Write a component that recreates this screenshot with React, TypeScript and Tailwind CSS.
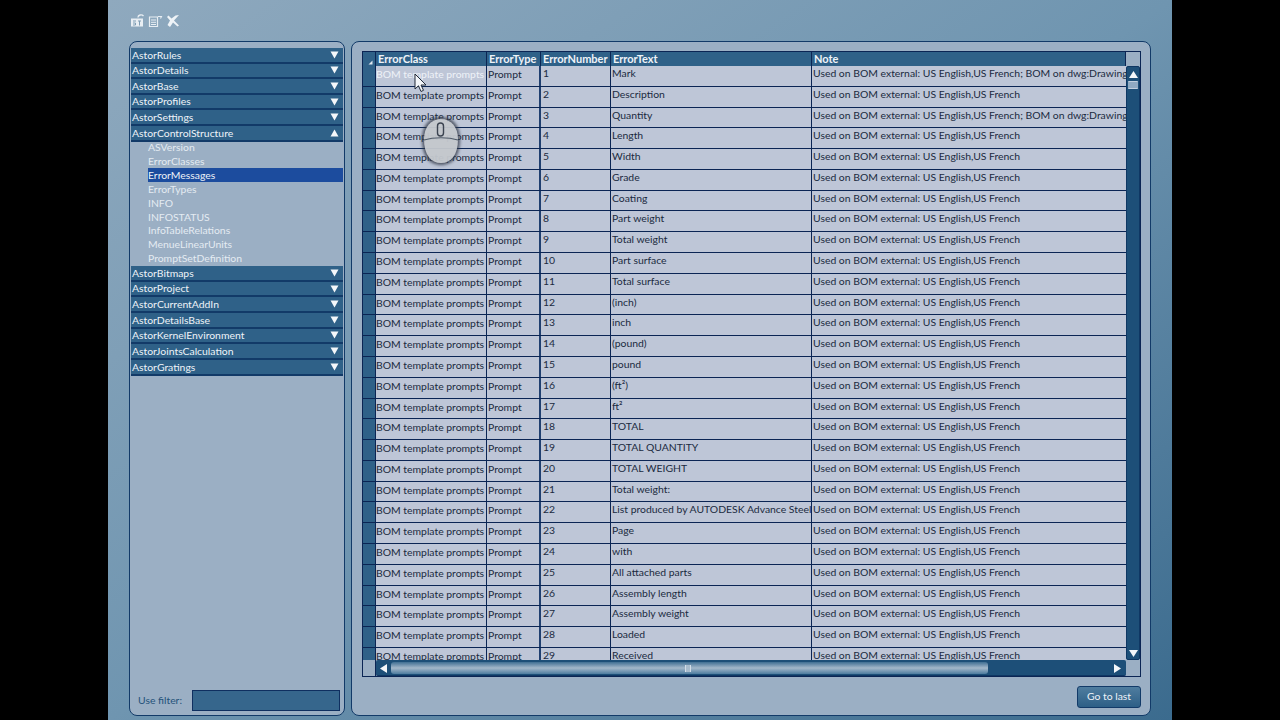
const font = "[font-family:'Lato','Open_Sans',sans-serif]";

const texts = ["Mark","Description","Quantity","Length","Width","Grade","Coating","Part weight","Total weight","Part surface","Total surface","(inch)","inch","(pound)","pound","(ft²)","ft²","TOTAL","TOTAL QUANTITY","TOTAL WEIGHT","Total weight:","List produced by AUTODESK Advance Steel","Page","with","All attached parts","Assembly length","Assembly weight","Loaded","Received"];
const noteA = "Used on BOM external: US English,US French";
const noteB = "Used on BOM external: US English,US French; BOM on dwg:Drawing-";

function Head({ label, open }: { label: string; open?: boolean }) {
  return (
    <div className="h-[15.62px] shrink-0 flex items-center justify-between bg-[#2f6188] border-b-2 border-[#123a68] pl-[1px] pr-[4px] text-[10.4px] text-[#eef3f8] leading-none">
      <span>{label}</span>
      <svg width="9" height="8" viewBox="0 0 9 8" className="shrink-0">
        <path d={open ? "M4.5 0.5 L8.5 7.5 L0.5 7.5 Z" : "M0.5 0.5 L8.5 0.5 L4.5 7.5 Z"} fill="#f4f7fa" />
      </svg>
    </div>
  );
}

function Sub({ label, active }: { label: string; active?: boolean }) {
  return (
    <div className={"h-[13.85px] shrink-0 ml-[17px] flex items-center text-[10.4px] leading-none " + (active ? "bg-[#1c4c9e] text-[#eef3f8]" : "text-[#e4ebf2]")}>
      {label}
    </div>
  );
}

function Row({ n, first }: { n: number; first: boolean }) {
  const note = n === 1 || n === 3 ? noteB : noteA;
  return (
    <div className="h-[20.79px] shrink-0 flex border-b border-[#0b2554] text-[10.4px] leading-none text-[#1a2a40] overflow-hidden">
      <div className="w-[13px] shrink-0 bg-[#2f6188] border-r border-[#0b2554]" />
      <div className={"w-[111px] shrink-0 border-r border-[#0b2554] pt-[3px] whitespace-nowrap overflow-hidden " + (first ? "text-[#eef2f8]" : "")}>BOM template prompts</div>
      <div className="w-[54px] shrink-0 border-r-2 border-[#1f3f70] pl-[1px] pt-[3px]">Prompt</div>
      <div className="w-[70px] shrink-0 border-r border-[#0b2554] pl-[2px] pt-[2px]">{n}</div>
      <div className="w-[201px] shrink-0 border-r border-[#0b2554] pl-[1px] pt-[2px] whitespace-nowrap overflow-hidden">{texts[n - 1]}</div>
      <div className="flex-1 min-w-0 pl-[1px] pt-[2px] whitespace-nowrap overflow-hidden">{note}</div>
    </div>
  );
}

function HeadCell({ w, label }: { w: string; label: string }) {
  return <div className={w + " shrink-0 border-r border-[#0b2554] pl-[2px] pb-[1px] flex items-center whitespace-nowrap overflow-hidden"}>{label}</div>;
}

function Icons() {
  return (
    <div className="h-[41px] shrink-0 pl-[22px] pt-[14px] flex items-start gap-[3px]">
      <svg width="15" height="14" viewBox="0 0 15 14" fill="none">
        <path d="M1 4.5h12v8H1z" fill="#e8eef3" />
        <path d="M3 7h3M3 9h2.5v2H3M8 7h3M9.5 7v4.500" stroke="#7f9db4" strokeWidth="1" />
        <path d="M8 3.500a3 2.500 0 0 1 5.500-1.500" stroke="#e8eef3" strokeWidth="1.300" />
      </svg>
      <svg width="15" height="14" viewBox="0 0 15 14" fill="none">
        <path d="M1.500 3h8v9.500h-8z" stroke="#e8eef3" strokeWidth="1.200" />
        <path d="M3 6h5M3 8.300h5M3 10.500h5" stroke="#e8eef3" strokeWidth="1" />
        <path d="M10 2.500h3.500l-1 2" stroke="#e8eef3" strokeWidth="1.100" />
      </svg>
      <svg width="14" height="14" viewBox="0 0 14 14" fill="none">
        <path d="M1 3 L4 6.500 L1.500 11 L4 13 L7 8.500 L11.500 12.500 L13 11.500 L8 6.500 L13 1 L9.500 1.500 L5.500 4.500 L2.500 1.500 Z" fill="#eef3f7" />
      </svg>
    </div>
  );
}

function LeftPanel() {
  const top = ["AstorRules", "AstorDetails", "AstorBase", "AstorProfiles", "AstorSettings"];
  const subs = ["ASVersion", "ErrorClasses", "ErrorMessages", "ErrorTypes", "INFO", "INFOSTATUS", "InfoTableRelations", "MenueLinearUnits", "PromptSetDefinition"];
  const bottom = ["AstorBitmaps", "AstorProject", "AstorCurrentAddIn", "AstorDetailsBase", "AstorKernelEnvironment", "AstorJointsCalculation", "AstorGratings"];
  return (
    <div className="w-[216px] shrink-0 h-[675px] rounded-[8px] border border-[#123a68] bg-[#9bafc4] pt-[6px] px-[1px] pb-[4px] flex flex-col">
      <div className="flex flex-col flex-1 min-h-0">
        {top.map((t) => <Head key={t} label={t} />)}
        <Head label="AstorControlStructure" open />
        <div className="flex flex-col -mt-[1px] mb-[1px]">
          {subs.map((s) => <Sub key={s} label={s} active={s === "ErrorMessages"} />)}
        </div>
        {bottom.map((t) => <Head key={t} label={t} />)}
      </div>
      <div className="flex items-center pl-[7px] pr-[3px] text-[10.4px] text-[#24527a]">
        <span className="w-[54px] shrink-0 pt-[1px]">Use filter:</span>
        <div className="flex-1 h-[21px] bg-[#36668c] border border-[#0f2f60]" />
      </div>
    </div>
  );
}

function Grid() {
  return (
    <div className="w-[779px] h-[626px] border border-[#0b2554] flex flex-col bg-[#9bafc4]">
      <div className="h-[14px] shrink-0 flex text-[11px] font-bold text-[#eef3f8] leading-none">
        <div className="w-[13px] shrink-0 bg-[#2f6188] border-r border-[#0b2554] relative">
          <svg width="5" height="5" viewBox="0 0 5 5" className="absolute right-[2px] bottom-[1px]"><path d="M4.500 0.500V4.500H0.500Z" fill="#dfe7ef" /></svg>
        </div>
        <div className="flex flex-1 bg-[#2f6188] border-r border-[#0b2554]">
          <HeadCell w="w-[111px]" label="ErrorClass" />
          <HeadCell w="w-[54px]" label="ErrorType" />
          <HeadCell w="w-[70px]" label="ErrorNumber" />
          <HeadCell w="w-[201px]" label="ErrorText" />
          <div className="flex-1 pl-[2px] pb-[1px] flex items-center">Note</div>
        </div>
        <div className="w-[14px] shrink-0" />
      </div>
      <div className="flex-1 min-h-0 flex">
        <div className="flex-1 min-w-0 flex flex-col overflow-hidden bg-[#bec6d7] relative">
          {Array.from({ length: 29 }, (_, i) => <Row key={i} n={i + 1} first={i === 0} />)}
        </div>
        <div className="w-[14px] shrink-0 bg-[#1d4f78] rounded-[2px] border border-[#0f3763] flex flex-col items-center pt-[4px] pb-[2px]">
          <svg width="9" height="7" viewBox="0 0 9 7"><path d="M4.500 0 L9 7 L0 7 Z" fill="#f4f7fa" /></svg>
          <div className="w-[10px] h-[8px] mt-[3px] bg-[#8fa9c2] rounded-[1px] border-y border-[#c0cede]" />
          <div className="flex-1" />
          <svg width="9" height="7" viewBox="0 0 9 7"><path d="M0 0 L9 0 L4.500 7 Z" fill="#f4f7fa" /></svg>
        </div>
      </div>
      <div className="h-[16px] shrink-0 flex">
        <div className="w-[13px] shrink-0 bg-[#9bafc4] border-r border-[#0b2554]" />
        <div className="flex-1 min-w-0 bg-[#1d4f78] rounded-[2px] border-b border-[#0f3763] pt-[1px] flex items-center pr-[5px]">
          <div className="w-[15px] shrink-0 flex justify-center">
            <svg width="7" height="9" viewBox="0 0 7 9"><path d="M7 0 L7 9 L0 4.500 Z" fill="#f4f7fa" /></svg>
          </div>
          <div className="w-[597px] h-[12px] rounded-[3px] bg-gradient-to-b from-[#3f6f93] via-[#a4b8ca] to-[#4d7c9f] flex items-center justify-center">
            <div className="w-[6px] h-[7px] mr-[3px] border-x border-[#d3dde7] bg-[#a9bccd]" />
          </div>
          <div className="flex-1" />
          <svg width="7" height="9" viewBox="0 0 7 9"><path d="M0 0 L7 4.500 L0 9 Z" fill="#f4f7fa" /></svg>
        </div>
        <div className="w-[14px] shrink-0" />
      </div>
    </div>
  );
}

function RightPanel() {
  return (
    <div className="w-[800px] shrink-0 h-[675px] rounded-[8px] border border-[#123a68] bg-[#9bafc4] pt-[9px] pl-[10px] flex flex-col">
      <Grid />
      <div className="w-[779px] flex justify-end pt-[9px]">
        <div className="w-[64px] h-[22px] rounded-[3px] border border-[#123a68] bg-gradient-to-b from-[#4f7d9f] to-[#2d5f86] flex items-center justify-center text-[10.4px] text-[#eef3f8]">
          Go to last
        </div>
      </div>
    </div>
  );
}

export default function App() {
  return (
    <div className={"w-[1280px] h-[720px] bg-black flex justify-center overflow-hidden " + font}>
      <div className="w-[1064px] h-[720px] relative flex flex-col bg-gradient-to-br from-[#8fa9be] via-[#6f95b0] to-[#3b6b8e]">
        <Icons />
        <div className="flex gap-[6px] pl-[21px]">
          <LeftPanel />
          <RightPanel />
        </div>
        <svg width="46" height="54" viewBox="0 0 46 54" className="absolute left-[310px] top-[114px]">
          <defs>
            <filter id="b" x="-30%" y="-30%" width="160%" height="160%"><feGaussianBlur stdDeviation="1.500" /></filter>
          </defs>
          <path d="M23 3 C35 3 42 12 42 25 C42 42 35 51 23 51 C11 51 4 42 4 25 C4 12 11 3 23 3Z" fill="#2d3542" opacity="0.75" filter="url(#b)" />
          <path d="M23 5 C33 5 40 13 40 25 C40 41 33 49 23 49 C13 49 6 41 6 25 C6 13 13 5 23 5Z" fill="#dde0e4" fillOpacity="0.82" />
          <path d="M6 26 C16 23 30 23 40 26" stroke="#4f5a68" strokeWidth="1.200" fill="none" />
          <rect x="19.500" y="9" width="6" height="13" rx="3" fill="none" stroke="#3b4350" strokeWidth="1.400" />
        </svg>
        <svg width="14" height="20" viewBox="0 0 14 20" className="absolute left-[306px] top-[73px]">
          <path d="M1 1 V16 L4.500 12.800 L7 18.500 L9.500 17.300 L7 12 H12 Z" fill="#f5f7fa" stroke="#222a38" strokeWidth="1" />
        </svg>
      </div>
    </div>
  );
}
